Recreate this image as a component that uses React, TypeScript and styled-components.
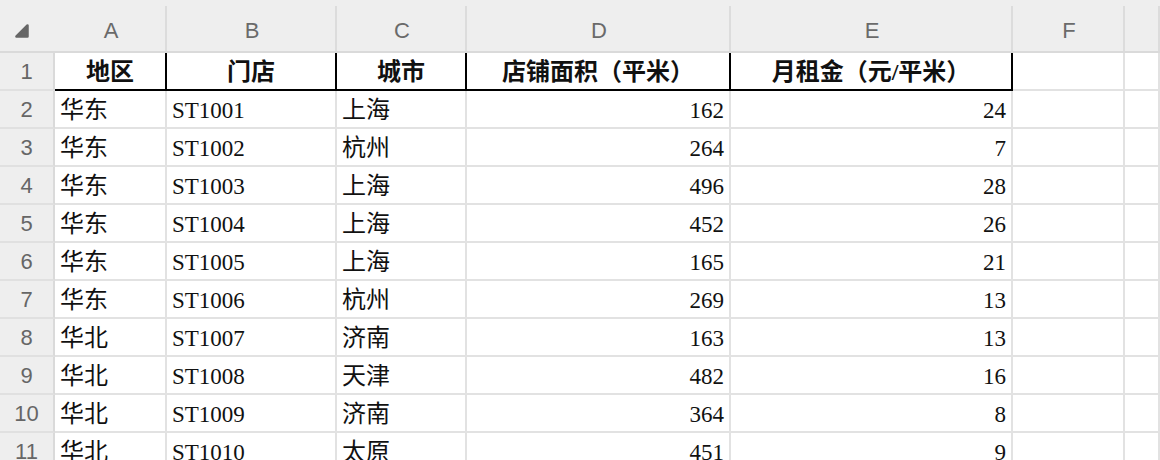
import styled, { createGlobalStyle } from "styled-components";

const GlobalStyle = createGlobalStyle`
  html, body {
    margin: 0;
    padding: 0;
    background: #fff;
    overflow: hidden;
  }
`;

const columns = ["A", "B", "C", "D", "E", "F", ""];

const headers = ["地区", "门店", "城市", "店铺面积（平米）", "月租金（元/平米）"];

type Row = [string, string, string, number, number];

const rows: Row[] = [
  ["华东", "ST1001", "上海", 162, 24],
  ["华东", "ST1002", "杭州", 264, 7],
  ["华东", "ST1003", "上海", 496, 28],
  ["华东", "ST1004", "上海", 452, 26],
  ["华东", "ST1005", "上海", 165, 21],
  ["华东", "ST1006", "杭州", 269, 13],
  ["华北", "ST1007", "济南", 163, 13],
  ["华北", "ST1008", "天津", 482, 16],
  ["华北", "ST1009", "济南", 364, 8],
  ["华北", "ST1010", "太原", 451, 9],
];

const Sheet = styled.div`
  display: grid;
  grid-template-columns: 55px 112px 170px 130px 264px 282px 112px 1fr;
  grid-template-rows: 53px;
  grid-auto-rows: 38px;
  width: 1160px;
  height: 460px;
  overflow: hidden;
`;

const Corner = styled.div`
  background: #eeeeee;
  border-bottom: 2px solid #dadada;
  padding: 24px 0 0 15px;
  box-sizing: border-box;
`;

const ColHeader = styled.div`
  box-sizing: border-box;
  display: flex;
  align-items: center;
  justify-content: center;
  padding-top: 10px;
  background: linear-gradient(#dcdcdc, #dcdcdc) right bottom / 2px
      calc(100% - 6px) no-repeat,
    #eeeeee;
  border-bottom: 2px solid #dadada;
  font-family: "Liberation Sans", Arial, sans-serif;
  font-size: 22px;
  color: #6a6a6a;
`;

const RowHeader = styled.div`
  box-sizing: border-box;
  display: flex;
  align-items: center;
  justify-content: center;
  padding-top: 2px;
  background: #eeeeee;
  border-right: 2px solid #dadada;
  border-bottom: 2px solid #e0e0e0;
  font-family: "Liberation Sans", Arial, sans-serif;
  font-size: 22px;
  color: #666666;
`;

const Cell = styled.div<{
  $align?: "left" | "right" | "center";
  $head?: boolean;
  $cjk?: boolean;
}>`
  box-sizing: border-box;
  display: flex;
  align-items: center;
  justify-content: ${(p) =>
    p.$align === "right" ? "flex-end" : p.$align === "center" ? "center" : "flex-start"};
  padding: 2px 5px 0 5px;
  border-right: 2px solid ${(p) => (p.$head ? "#000" : "#e2e2e2")};
  border-bottom: 2px solid ${(p) => (p.$head ? "#000" : "#e2e2e2")};
  font-family: "Liberation Serif", "Noto Sans CJK SC", serif;
  font-size: ${(p) => (p.$cjk ? "24px" : "23px")};
  font-weight: ${(p) => (p.$head ? 700 : 400)};
  line-height: 1;
  color: #111111;
  white-space: nowrap;
  overflow: hidden;
`;

function CornerMark() {
  return (
    <svg width="14" height="14" viewBox="0 0 14 14">
      <polygon
        points="1.5,12.5 12.5,12.5 12.5,1.5"
        fill="#666666"
        stroke="#666666"
        strokeWidth="2.5"
        strokeLinejoin="round"
      />
    </svg>
  );
}

export default function App() {
  return (
    <>
      <GlobalStyle />
      <Sheet>
        <Corner>
          <CornerMark />
        </Corner>
        {columns.map((c, i) => (
          <ColHeader key={i}>{c}</ColHeader>
        ))}

        <RowHeader>1</RowHeader>
        {headers.map((h) => (
          <Cell key={h} $align="center" $head $cjk>
            {h}
          </Cell>
        ))}
        <Cell />
        <Cell />

        {rows.map((r, i) => (
          <Row key={r[1]} index={i + 2} row={r} />
        ))}
      </Sheet>
    </>
  );
}

function Row({ index, row }: { index: number; row: Row }) {
  return (
    <>
      <RowHeader>{index}</RowHeader>
      <Cell $cjk>{row[0]}</Cell>
      <Cell>{row[1]}</Cell>
      <Cell $cjk>{row[2]}</Cell>
      <Cell $align="right">{row[3]}</Cell>
      <Cell $align="right">{row[4]}</Cell>
      <Cell />
      <Cell />
    </>
  );
}
